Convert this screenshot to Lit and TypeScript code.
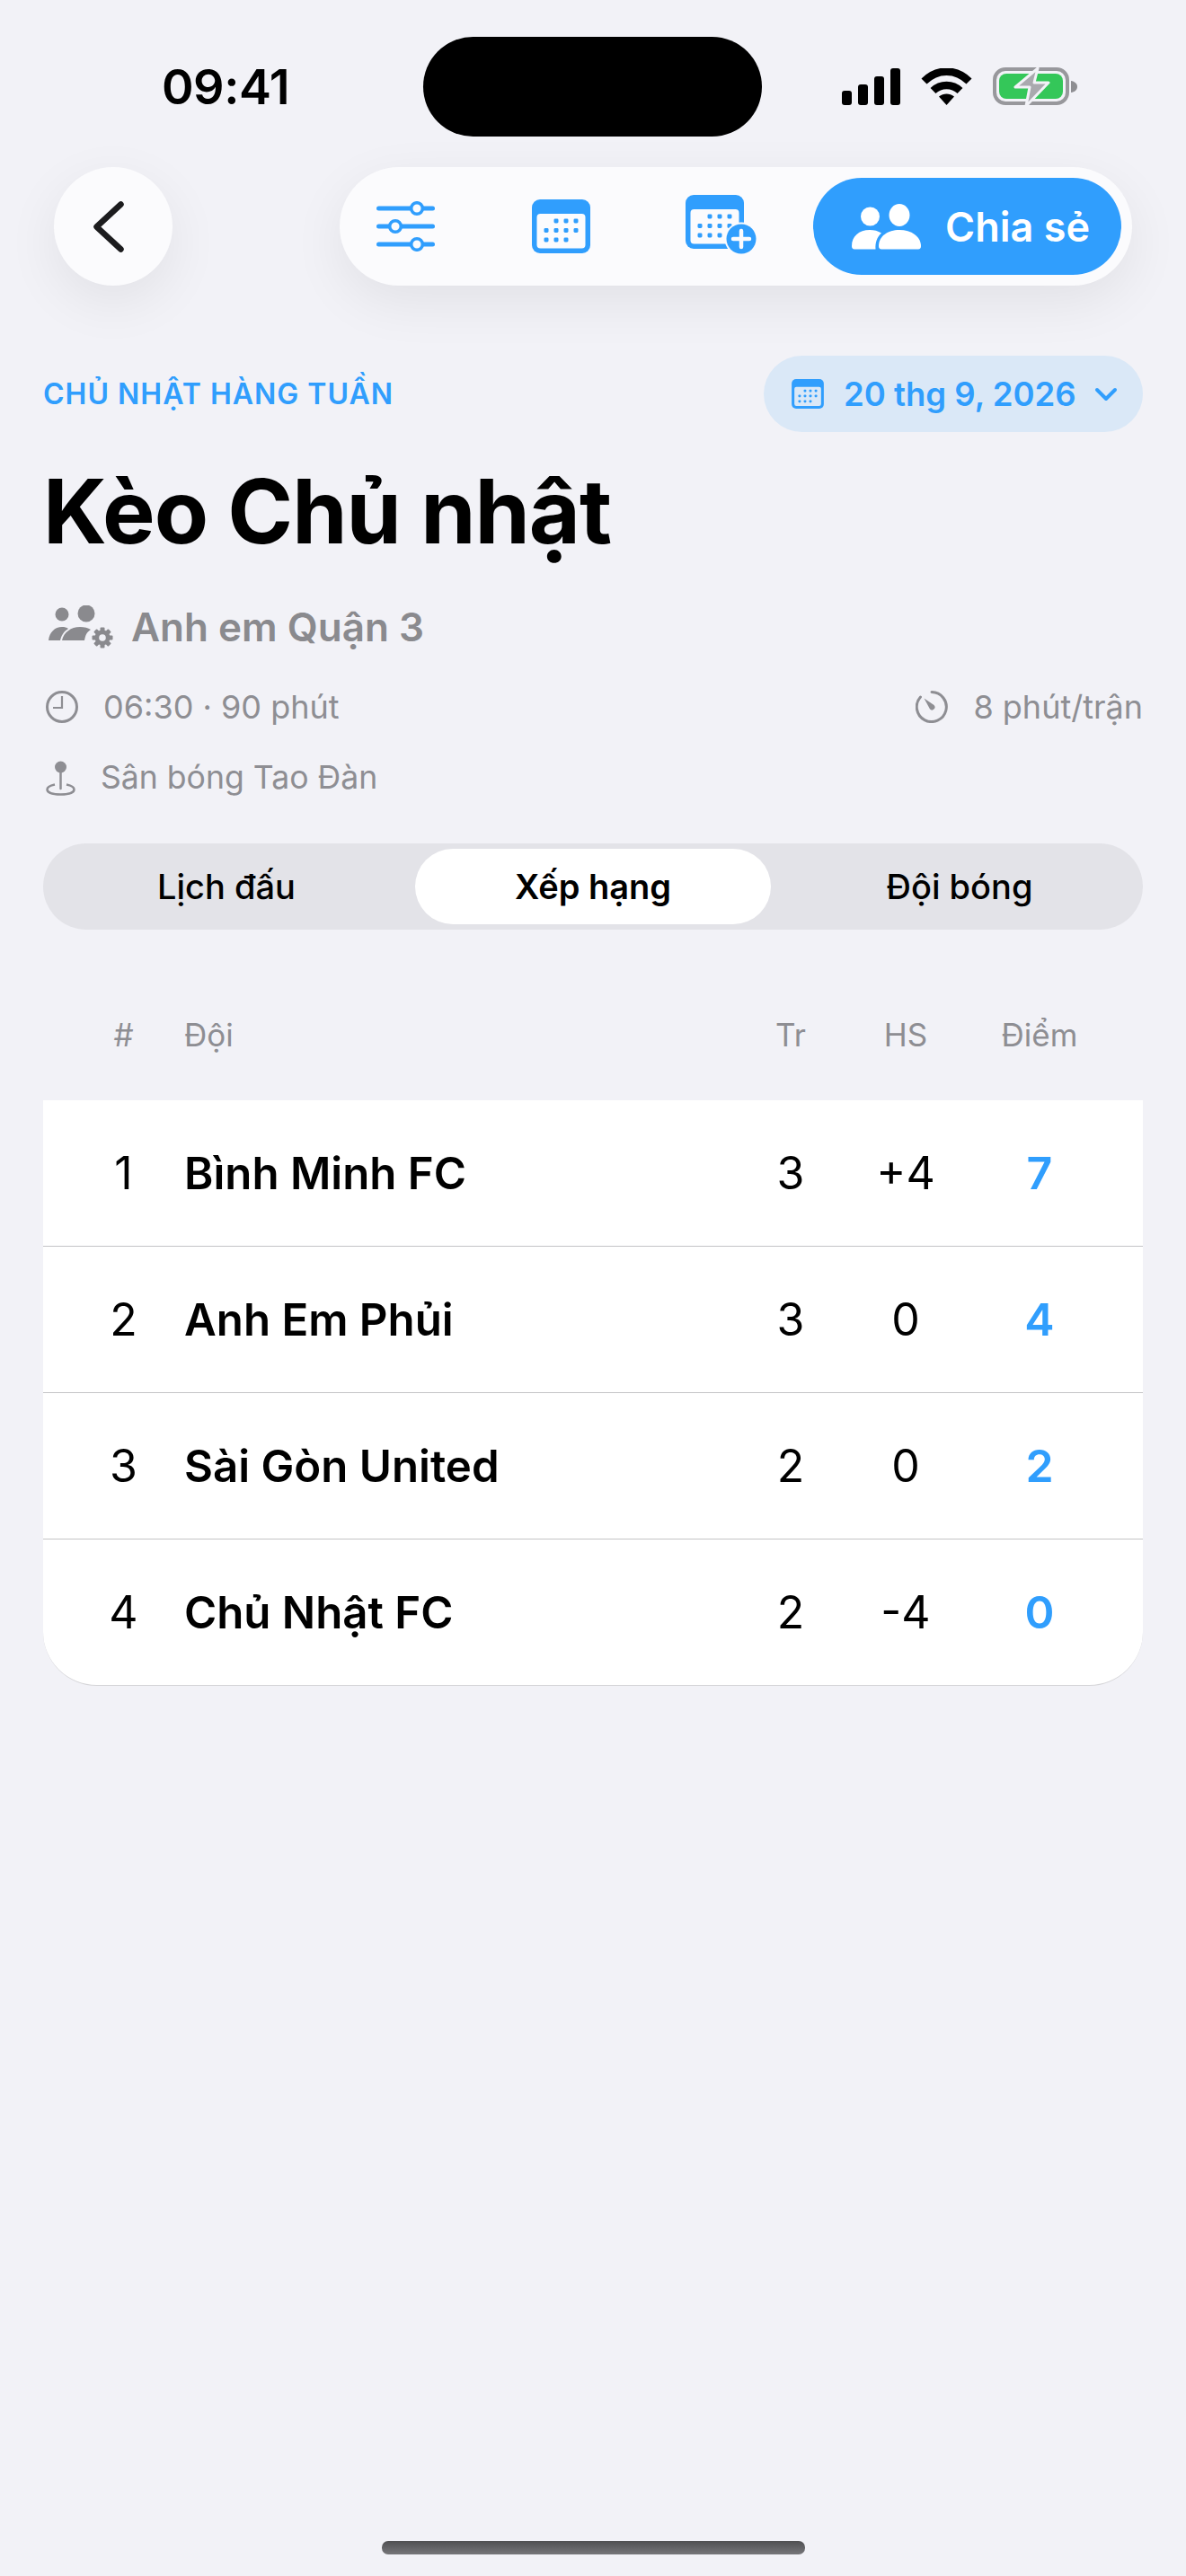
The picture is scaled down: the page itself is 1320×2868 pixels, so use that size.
import { LitElement, css, html, svg } from "lit";
import { customElement } from "lit/decorators.js";

const rows = [
  { rank: 1, name: "Bình Minh FC", played: 3, diff: "+4", pts: 7 },
  { rank: 2, name: "Anh Em Phủi", played: 3, diff: "0", pts: 4 },
  { rank: 3, name: "Sài Gòn United", played: 2, diff: "0", pts: 2 },
  { rank: 4, name: "Chủ Nhật FC", played: 2, diff: "-4", pts: 0 },
];

// dots of the calendar glyph, as [col, row]
const calDots = [
  [1, 0], [2, 0], [3, 0],
  [0, 1], [1, 1], [2, 1], [3, 1],
  [0, 2], [1, 2], [2, 2],
];

const calendarInner = () => svg`
  <rect x="0" y="0" width="65" height="60" rx="9" fill="currentColor"/>
  <rect x="5.5" y="16" width="54" height="38.5" rx="4" fill="var(--fill)"/>
  ${calDots.map(
    ([c, r]) => svg`<rect x="${13.5 + c * 11}" y="${21.5 + r * 10.5}" width="5" height="5" rx="1.4" fill="currentColor"/>`
  )}
`;

@customElement("app-root")
export class AppRoot extends LitElement {
  static styles = css`
    :host {
      display: block;
      position: relative;
      width: 1320px;
      height: 2868px;
      background: #f2f2f7;
      font-family: Inter, "Noto Sans", sans-serif;
      color: #000;
      overflow: hidden;
    }
    svg {
      display: block;
      flex: none;
    }
    .status {
      display: flex;
      align-items: center;
      justify-content: space-between;
      height: 58px;
      padding: 68px 121px 0 180px;
    }
    .time {
      font-size: 54px;
      font-weight: 600;
      line-height: 58px;
      letter-spacing: -0.5px;
    }
    .sys {
      display: flex;
      align-items: center;
      gap: 23px;
      margin-top: -1px;
    }
    .island {
      position: absolute;
      left: 471px;
      top: 41px;
      width: 377px;
      height: 111px;
      border-radius: 56px;
      background: #000;
    }
    .nav {
      display: flex;
      justify-content: space-between;
      padding: 60px 60px 0;
    }
    .back {
      display: flex;
      align-items: center;
      justify-content: center;
      box-sizing: border-box;
      width: 132px;
      height: 132px;
      padding-right: 10px;
      border-radius: 50%;
      background: #fbfbfd;
      box-shadow: 0 18px 60px rgba(0, 0, 0, 0.07);
      color: #1c1c1e;
    }
    .tools {
      display: flex;
      align-items: center;
      width: 882px;
      height: 132px;
      box-sizing: border-box;
      padding-left: 41px;
      padding-right: 12px;
      border-radius: 66px;
      background: #fbfbfd;
      box-shadow: 0 18px 60px rgba(0, 0, 0, 0.07);
      color: #309efd;
      --fill: #fbfbfd;
    }
    .tool-sliders {
      margin-right: 108px;
    }
    .tool-cal {
      margin-right: 106px;
    }
    .tool-add {
      margin-bottom: 4px;
    }
    .share {
      display: flex;
      align-items: center;
      gap: 27px;
      box-sizing: border-box;
      width: 343px;
      height: 108px;
      margin-left: auto;
      padding-left: 43px;
      border-radius: 54px;
      background: #309efd;
      color: #fff;
      font-size: 45px;
      font-weight: 600;
      white-space: nowrap;
    }
    .head {
      padding: 78px 48px 0;
    }
    .eyebrow-row {
      display: flex;
      align-items: center;
      justify-content: space-between;
    }
    .eyebrow {
      color: #309efd;
      font-size: 32px;
      font-weight: 600;
      letter-spacing: 1px;
    }
    .chip {
      display: flex;
      align-items: center;
      box-sizing: border-box;
      width: 422px;
      height: 85px;
      padding: 0 31px;
      border-radius: 43px;
      background: #dae8f7;
      color: #309efd;
      --fill: #dae8f7;
      font-size: 36.5px;
      font-weight: 600;
      white-space: nowrap;
    }
    .chip .label {
      margin-left: 22px;
      margin-right: 20px;
    }
    h1 {
      margin: 29px 0 0;
      font-size: 98.5px;
      line-height: 120px;
      font-weight: 700;
      letter-spacing: -1px;
    }
    .group {
      display: flex;
      align-items: center;
      gap: 20px;
      margin-top: 40px;
      padding-left: 6px;
      color: #8a8a8e;
      font-size: 44px;
      font-weight: 600;
      line-height: 56px;
    }
    .meta {
      display: flex;
      align-items: center;
      justify-content: space-between;
      color: #8e8e93;
      font-size: 36px;
      line-height: 44px;
      margin-top: 39px;
      padding-left: 3px;
    }
    .meta-item {
      display: flex;
      align-items: center;
      gap: 28px;
    }
    .meta.place {
      margin-top: 35px;
      font-size: 35.6px;
    }
    .tabs {
      display: grid;
      grid-template-columns: repeat(3, 396px);
      gap: 12px;
      align-items: center;
      height: 96px;
      margin-top: 51px;
      padding: 0 6px;
      box-sizing: border-box;
      border-radius: 48px;
      background: #e3e3e8;
      font-size: 38px;
      font-weight: 500;
      text-align: center;
    }
    .tab.on {
      height: 84px;
      line-height: 84px;
      border-radius: 42px;
      background: #fff;
      font-weight: 600;
    }
    .table {
      padding: 0 48px;
    }
    .tr {
      display: grid;
      grid-template-columns: 79px 1fr 100px 156px 142px;
      align-items: center;
      padding-left: 50px;
      padding-right: 44px;
    }
    .tr > :nth-child(1),
    .tr > :nth-child(n + 3) {
      text-align: center;
    }
    .tr > :nth-child(2) {
      padding-left: 28px;
    }
    .th {
      height: 190px;
      box-sizing: border-box;
      padding-top: 44px;
      color: #8e8e93;
      font-size: 35px;
    }
    .card {
      background: #fff;
      border-bottom: 1px solid #d5d5d8;
      border-radius: 0 0 60px 60px;
      overflow: hidden;
    }
    .row {
      height: 162px;
      border-bottom: 1px solid #c4c4c6;
      font-size: 50px;
    }
    .row:last-child {
      border-bottom: 0;
    }
    .name {
      font-size: 49.2px;
      font-weight: 600;
    }
    .pts {
      color: #309efd;
      font-weight: 600;
    }
    .home {
      position: absolute;
      left: 425px;
      top: 2829px;
      width: 471px;
      height: 15px;
      border-radius: 7px;
      background: linear-gradient(#505052, #76767a);
    }
  `;

  private signal() {
    return html`<svg width="65" height="42" viewBox="0 0 65 42">
      <rect x="0" y="25" width="11" height="16" rx="3"/>
      <rect x="18" y="18" width="11" height="23" rx="3"/>
      <rect x="36" y="9" width="11" height="32" rx="3"/>
      <rect x="54" y="0" width="11" height="41" rx="3"/>
    </svg>`;
  }

  private wifi() {
    return html`<svg width="57" height="42" viewBox="0 0 57 42" fill="none" stroke="#000" stroke-width="8.500">
      <path d="M3.500 14.500C18 0 39 0 53.500 14.500"/>
      <path d="M13.500 25C22 17 35 17 43.500 25"/>
      <path d="M28.500 41L20 31.500C25 27.500 32 27.500 37 31.500Z" fill="#000" stroke="none"/>
    </svg>`;
  }

  private battery() {
    return html`<svg width="94" height="44" viewBox="0 0 94 44">
      <rect x="2" y="2" width="81" height="38" rx="12" fill="none" stroke="#98989c" stroke-width="4"/>
      <rect x="7" y="7" width="71" height="28" rx="8" fill="#34c759"/>
      <path d="M87 15c4 .6 7 3 7 6.500s-3 6-7 6.500z" fill="#8e8e92"/>
      <path d="M50 1L25 22H41L37 43L62 17H46Z" fill="#a9a9ae" stroke="#f2f2f7" stroke-width="3" stroke-linejoin="round"/>
    </svg>`;
  }

  private sliders() {
    const line = (y: number, cx: number) => svg`
      <path d="M2.500 ${y}H62.500" stroke="currentColor" stroke-width="5" stroke-linecap="round"/>
      <circle cx="${cx}" cy="${y}" r="6.300" fill="var(--fill)" stroke="currentColor" stroke-width="3.500"/>
    `;
    return html`<svg class="tool-sliders" width="65" height="56" viewBox="0 0 65 56" fill="none">
      ${line(8, 45)}${line(28, 21)}${line(48, 45)}
    </svg>`;
  }

  private people() {
    return html`<svg width="77" height="51" viewBox="0 0 77 51" fill="currentColor">
      <circle cx="20.500" cy="14" r="10.500"/>
      <ellipse cx="53" cy="12.500" rx="11.500" ry="12.500"/>
      <path d="M0 47C0 36 8 29 20 29C25 29 29 30 33 32.500C28 37 26 43 26.500 50.500H3C1 50.500 0 49 0 47Z"/>
      <path d="M30 47C30 36 40 29 53 29C66 29 77 36 77 47C77 49 76 50.500 74 50.500H33C31 50.500 30 49 30 47Z"/>
    </svg>`;
  }

  private groupIcon() {
    const teeth = [0, 45, 90, 135].map(
      (a) => svg`<rect x="57.500" y="24.500" width="5" height="23" rx="1" transform="rotate(${a} 60 36)"/>`
    );
    return html`<svg width="72" height="48" viewBox="0 0 72 48" fill="#8a8a8e">
      <circle cx="15" cy="10" r="7.500"/>
      <circle cx="42" cy="9" r="9.500"/>
      <path d="M0 39C1 30 7 24 15 24C18 24 20 24.500 22 26C17 29 14 34 13 39Z"/>
      <path d="M15 39C17 30 25 24 35 24C40 24 44 25 47 27C42 30 41 34 40 39Z"/>
      ${teeth}
      <circle cx="60" cy="36" r="8.500"/>
      <circle cx="60" cy="36" r="3.800" fill="#f2f2f7"/>
    </svg>`;
  }

  render() {
    return html`
      <div class="island"></div>
      <div class="status">
        <span class="time">09:41</span>
        <div class="sys">${this.signal()}${this.wifi()}${this.battery()}</div>
      </div>

      <div class="nav">
        <div class="back">
          <svg width="34" height="57" viewBox="0 0 34 57" fill="none" stroke="currentColor" stroke-width="6.500" stroke-linecap="round" stroke-linejoin="round">
            <path d="M30.500 3.500L3.500 28.500L30.500 53.500"/>
          </svg>
        </div>
        <div class="tools">
          ${this.sliders()}
          <svg class="tool-cal" width="65" height="60" viewBox="0 0 65 60">${calendarInner()}</svg>
          <svg class="tool-add" width="79" height="66" viewBox="0 0 79 66">
            ${calendarInner()}
            <circle cx="62" cy="49" r="18.500" fill="var(--fill)"/>
            <circle cx="62" cy="49" r="16.500" fill="currentColor"/>
            <path d="M62 40V58M53 49H71" stroke="var(--fill)" stroke-width="4.500" stroke-linecap="round"/>
          </svg>
          <div class="share">${this.people()}<span>Chia sẻ</span></div>
        </div>
      </div>

      <div class="head">
        <div class="eyebrow-row">
          <span class="eyebrow">CHỦ NHẬT HÀNG TUẦN</span>
          <div class="chip">
            <svg width="36" height="33" viewBox="0 0 65 60">${calendarInner()}</svg>
            <span class="label">20 thg 9, 2026</span>
            <svg width="26" height="16" viewBox="0 0 26 16" fill="none" stroke="currentColor" stroke-width="4" stroke-linecap="round" stroke-linejoin="round">
              <path d="M3 3L13 13L23 3"/>
            </svg>
          </div>
        </div>
        <h1>Kèo Chủ nhật</h1>
        <div class="group">${this.groupIcon()}<span>Anh em Quận 3</span></div>
        <div class="meta">
          <div class="meta-item">
            <svg width="36" height="36" viewBox="0 0 36 36" fill="none" stroke="#8e8e93" stroke-width="3">
              <circle cx="18" cy="18" r="16.500"/>
              <path d="M18 6V19H8" stroke-width="2.200"/>
            </svg>
            <span>06:30 · 90 phút</span>
          </div>
          <div class="meta-item">
            <svg width="36" height="36" viewBox="0 0 36 36" fill="none" stroke="#8e8e93" stroke-width="3" stroke-linecap="round">
              <path d="M18 1.500A16.500 16.500 0 1 1 5.500 7"/>
              <path d="M9.500 8.500L20.500 16A3 3 0 0 1 16 20.500Z" fill="#8e8e93" stroke="none"/>
            </svg>
            <span>8 phút/trận</span>
          </div>
        </div>
        <div class="meta place">
          <div class="meta-item">
            <svg width="33" height="39" viewBox="0 0 33 39" fill="none" stroke="#8e8e93" stroke-width="2.500">
              <path d="M10 26.500C5 27.500 1.500 29.500 1.500 32C1.500 35.500 8 37.500 16.500 37.500C25 37.500 31.500 35.500 31.500 32C31.500 29.500 28 27.500 23 26.500"/>
              <path d="M16.500 12V31" stroke-linecap="round"/>
              <circle cx="16.500" cy="7" r="6.500" fill="#8e8e93" stroke="none"/>
            </svg>
            <span>Sân bóng Tao Đàn</span>
          </div>
        </div>
        <div class="tabs">
          <div class="tab">Lịch đấu</div>
          <div class="tab on">Xếp hạng</div>
          <div class="tab">Đội bóng</div>
        </div>
      </div>

      <div class="table">
        <div class="tr th">
          <span>#</span><span>Đội</span><span>Tr</span><span>HS</span><span>Điểm</span>
        </div>
        <div class="card">
          ${rows.map(
            (r) => html`<div class="tr row">
              <span>${r.rank}</span>
              <span class="name">${r.name}</span>
              <span>${r.played}</span>
              <span>${r.diff}</span>
              <span class="pts">${r.pts}</span>
            </div>`
          )}
        </div>
      </div>

      <div class="home"></div>
    `;
  }
}
